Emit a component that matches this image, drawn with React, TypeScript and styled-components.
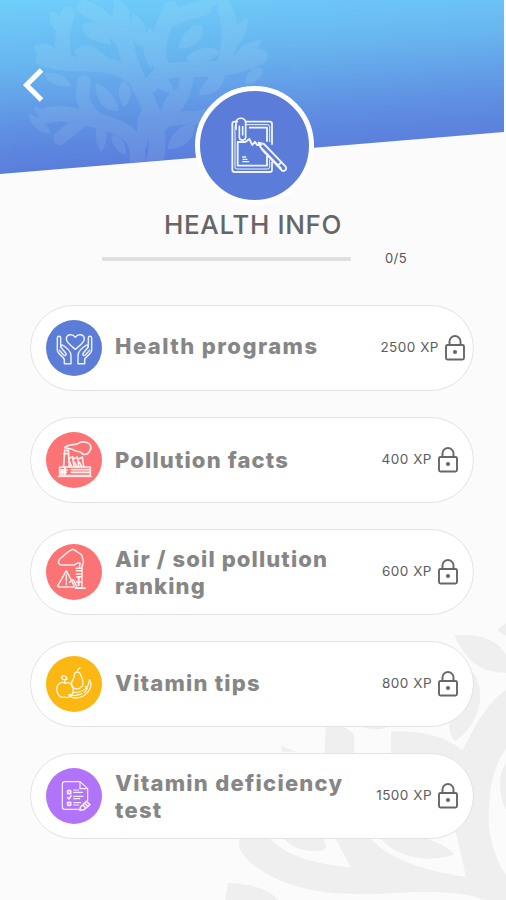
import React from "react";
import styled, { createGlobalStyle } from "styled-components";

const GlobalStyle = createGlobalStyle`
  * { box-sizing: border-box; }
  body { margin: 0; background: #fbfbfb; font-family: Inter, "Liberation Sans", sans-serif; }
`;

const Screen = styled.main`
  position: relative;
  width: 506px;
  height: 900px;
  overflow: hidden;
  background: #fbfbfb;
`;

const Header = styled.header`
  height: 175px;
  width: 504px;
  padding: 68px 0 0 22px;
  background: linear-gradient(176deg, #6fcffb 0%, #68b5ef 32%, #5f90e2 62%, #5a79da 88%);
  clip-path: polygon(0 0, 100% 0, 100% 132px, 0 174px);
`;

const HeaderTree = styled.svg`
  position: absolute;
  left: 0;
  top: 0;
  width: 300px;
  height: 190px;
`;

const CornerTree = styled.svg`
  position: absolute;
  right: 0;
  bottom: 0;
  width: 300px;
  height: 300px;
`;

const BackButton = styled.button`
  position: relative;
  display: block;
  width: 24px;
  height: 35px;
  padding: 0;
  border: 0;
  background: none;
  svg { display: block; }
`;

const Emblem = styled.div`
  position: relative;
  width: 119px;
  height: 119px;
  margin: -89px 0 0 195px;
  border: 5px solid #fff;
  border-radius: 50%;
  background: #5b7dd9;
  svg { display: block; width: 109px; height: 109px; }
`;

const Title = styled.h1`
  position: relative;
  margin: 4px 0 0;
  padding-left: 164px;
  font-size: 26px;
  font-weight: 500;
  line-height: 32px;
  letter-spacing: 0.65px;
  white-space: nowrap;
  color: #666;
`;

const Progress = styled.div`
  position: relative;
  display: flex;
  align-items: center;
  gap: 34px;
  height: 20px;
  margin: 7px 0 0 102px;
`;

const Track = styled.div`
  width: 249px;
  height: 4px;
  margin-top: 1px;
  border-radius: 1px;
  background: #dfdfdf;
`;

const Count = styled.span`
  font-size: 13px;
  letter-spacing: 0.4px;
  color: #555;
`;

const List = styled.ul`
  position: relative;
  display: grid;
  gap: 26px;
  margin: 37px 0 0 30px;
  padding: 0;
  list-style: none;
`;

const Card = styled.li<{ $end: number }>`
  display: flex;
  align-items: center;
  width: 444px;
  height: 86px;
  padding: 0 ${(p) => p.$end}px 0 15px;
  border: 1px solid #e3e3e3;
  border-radius: 43px;
  background: #fff;
`;

const Badge = styled.div<{ $color: string }>`
  flex: none;
  width: 56px;
  height: 56px;
  border-radius: 50%;
  background: ${(p) => p.$color};
  svg { display: block; width: 56px; height: 56px; }
`;

const Label = styled.span<{ $spacing: number; $lift: number }>`
  flex: 1;
  margin: 0 0 ${(p) => p.$lift}px 13px;
  font-size: 22px;
  font-weight: 800;
  line-height: 27px;
  letter-spacing: ${(p) => p.$spacing}px;
  white-space: pre;
  color: #868686;
`;

const Price = styled.span`
  margin: -3px 5px 0 0;
  font-size: 13.5px;
  letter-spacing: 0.5px;
  white-space: nowrap;
  color: #5c5c5c;
`;

const LockSvg = styled.svg`
  flex: none;
  width: 22px;
  height: 28px;
`;

const Lock = () => (
  <LockSvg viewBox="0 0 22 28" fill="none" stroke="#666" strokeWidth="1.9">
    <rect x="2" y="11" width="18" height="14.5" rx="1.5" />
    <path d="M5.5 11V7.5a5.5 5.5 0 0 1 11 0V11" />
    <circle cx="11" cy="18" r="2.1" fill="#666" stroke="none" />
  </LockSvg>
);

type LineProps = { width?: number; children: React.ReactNode };
const LineIcon = ({ width = 4.4, children }: LineProps) => (
  <svg viewBox="18 30 168 168" fill="none" stroke="#fff" strokeOpacity="0.88" strokeWidth={width} strokeLinecap="round" strokeLinejoin="round">
    {children}
  </svg>
);

const HandsHeart = () => (
  <LineIcon>
    <path d="M106 118C96 109 79 98 79 87c0-14 18-18 27-5 8-13 27-9 27 5 0 11-17 22-27 31Z" />
    <path d="M52 84c0-7 10-7 10 0v27l15 18c4 5-1 10-6 6L58 121M52 84v37c0 11 20 19 21 28v12h20v-24c0-12-14-25-24-31-5-3-8 2-5 6" />
    <path d="M155 84c0-7-10-7-10 0v27l-15 18c-4 5 1 10 6 6l13-14M155 84v37c0 11-20 19-21 28v12h-20v-24c0-12 14-25 24-31 5-3 8 2 5 6" />
  </LineIcon>
);

const Factory = () => (
  <LineIcon width={5}>
    <path d="M74 77c12-13 31-6 41-13 12-9 35-3 37 9 3 10-4 13-5 18-6 9-18 8-23 1-7-5-13-2-19-6-11-8-22-6-31-9Z" />
    <path d="M74 85h11l3 49M74 85l-3 49M72 95h14" />
    <path d="M59 135h92v26H59ZM62 144h20M62 151h17M94 143h56M94 151h56" />
    <path d="M88 109l10-5 4 30M102 110l10-5 4 29M117 110l10-5 4 29M88 119l7 15M103 120l7 14M118 120l7 14" />
    <path d="M54 164h100" strokeWidth="3" />
    <path d="M75 137v18M67 144v12" strokeWidth="7" />
  </LineIcon>
);

const Hazard = () => (
  <LineIcon>
    <path d="M120 88c-7-3-12 1-17 5H65c-7 0-11-5-9-13 2-6 7-9 12-12 9-9 20-18 29-22 7 1 13 6 18 10 9 4 13 10 12 16 6 6 3 14 1 21" />
    <path d="M120 88l-2 14M127 92l-1 10" />
    <path d="M108 103h18v59h-20M109 110h15M109 120h15M110 128h14M109 144h15" />
    <path d="M79 110 54 154q-2 5 4 5h40q7 0 4-5ZM79 122v20M79 147v4M106 163h30" />
    <path d="M88 145l12-8 10 20" />
    <path d="M116 130v24" strokeWidth="6" />
  </LineIcon>
);

const Fruit = () => (
  <LineIcon width={3.8}>
    <path d="M75 112c-12-8-25 3-25 17 0 16 12 29 24 24 13 6 27-7 26-22-1-17-13-25-25-19Z" />
    <path d="M75 111c-2-7 0-12 5-14M64 93c8-8 18-1 17 7-9 3-15-1-17-7Z" />
    <path d="M95 119c-5-13 10-20 8-32-1-9 14-13 18-3 4 13 14 22 5 37-10 12-27 9-31-2ZM112 75c1-5 4-8 8-10" />
    <path d="M149 101c13 26-12 53-41 55-9 1-16-3-21-8M149 101c-3 4-1 11-6 19-8 14-25 20-44 20M136 121c9 2 6 10-3 19M87 145c10 5 27 3 38-2" />
  </LineIcon>
);

const Checklist = () => (
  <LineIcon width={3.6}>
    <path d="M120 71H75q-8 0-8 8v67q0 8 8 8h43M120 71l23 21v36M120 71v21h23" />
    <path d="M101 96h15M101 103h26M101 115h28M101 122h18M101 134h21M101 141h15" />
    <path d="M83 98h9v9h-9ZM83 119l4 4 6-9M83 133h9v9h-9Z" strokeWidth="5" />
    <path d="m121 148 18-18 11 10-18 15-12 2ZM129 142l9 8M134 136l9 9" strokeWidth="4.5" />
  </LineIcon>
);

const Notebook = () => (
  <svg viewBox="33 31 327 327" fill="none" stroke="#fff" strokeOpacity="0.92" strokeWidth="5.5" strokeLinecap="round" strokeLinejoin="round">
    <path d="M249 190v-60q0-7-7-7h-72M145 123h-9q-6 0-6 7v137q0 7 7 7h105q7 0 7-7v-22" />
    <path d="M242 183v-45q0-6-6-6h-64M143 132q-5 0-5 6v121q0 6 6 6h92q6 0 6-6v-21" strokeWidth="3" />
    <path d="M182 141h52v40M146 184v71h88v-28M146 184h23l12-9 9 18 8-10 6 10h12" />
    <path d="M151 137v33c0 11 19 11 19 0v-43c0-19-29-19-29 0v19M161 138v25" strokeWidth="5" />
    <path d="m208 186 17 4 65 68c5 11-7 17-14 9l-57-60ZM213 198l63 65M268 253l10-9" />
    <path d="M161 229h9M162 236h12M161 243h18" strokeWidth="4" />
  </svg>
);

const HeaderLeaves = () => (
  <HeaderTree viewBox="0 0 900 570">
    <defs><clipPath id="sky"><path d="M0 0H900V445L0 520Z" /></clipPath></defs>
    <g clipPath="url(#sky)">
      <g opacity="0.09" fill="#e8faff" stroke="#e8faff" strokeLinecap="round">
        <g fill="none">
          <path d="M410 500C425 410 380 384 285 360S165 339 138 347" strokeWidth="46" />
          <path d="M460 500C486 420 466 350 430 278S374 159 362 38" strokeWidth="50" />
          <path d="M402 234C325 169 235 210 129 177M196 190Q175 123 204 41M357 112Q319 48 252 22" strokeWidth="44" />
          <path d="M454 253C507 164 620 250 780 170M484 196Q458 140 512 26M673 193Q704 93 674 26M520 55Q560 35 612 24" strokeWidth="46" />
          <path d="M484 374C532 330 596 382 654 322M482 353C549 323 561 256 561 214M285 350Q235 314 252 246M249 357Q218 385 180 415" strokeWidth="40" />
        </g>
        <g stroke="none">
          <path d="M101 140C145 112 186 157 180 177 139 186 114 177 101 140Z" />
          <path d="M222 154C267 112 299 155 330 178 278 201 239 191 222 154Z" />
          <path d="M246 76C288 51 332 95 333 134 283 127 248 111 246 76Z" />
          <path d="M398 42C440 57 448 107 428 143 395 128 383 93 398 42ZM449 83C480 114 479 162 453 205 421 160 428 110 449 83Z" />
          <path d="M535 146C544 99 579 67 606 78 616 116 589 146 535 146ZM557 177C585 139 637 135 661 156 628 191 587 198 557 177Z" />
          <path d="M742 53C706 61 690 109 698 150 733 121 748 86 742 53ZM784 120C742 123 708 147 701 180 750 174 775 152 784 120Z" />
          <path d="M133 222C155 210 207 230 215 259 168 263 141 248 133 222ZM287 250C319 258 359 302 355 334 310 334 286 299 287 250ZM371 241C402 264 398 303 371 321 350 291 354 258 371 241Z" />
          <path d="M456 220C498 224 525 253 518 280 481 278 458 255 456 220ZM482 334C495 283 531 255 560 263 564 306 529 333 482 334Z" />
          <path d="M104 320C125 323 142 340 143 354 115 351 103 338 104 320ZM87 342C120 352 149 376 151 402 115 398 89 373 87 342ZM300 370C325 386 326 423 304 456 281 423 282 389 300 370ZM336 404C367 409 382 434 377 464 348 455 333 431 336 404Z" />
          <path d="M503 448C508 400 545 370 584 374 585 416 553 446 503 448ZM596 285C610 234 647 211 673 220 676 264 641 290 596 285ZM735 251C739 216 762 194 787 205 790 230 769 253 735 251Z" />
          <path d="M425 330C455 366 452 419 432 454 406 414 405 366 425 330Z" />
          <path d="M339 0C378 2 378 14 346 26ZM603 0 690 1C671 20 638 23 603 0ZM150 35C185 36 195 70 188 103 158 94 145 68 150 35Z" />
        </g>
      </g>
    </g>
  </HeaderTree>
);

const CornerLeaves = () => (
  <CornerTree viewBox="0 0 900 900" fill="#efefef">
    <path d="M745 107C807 99 874 115 900 164V218C829 217 785 190 745 107ZM873 91 900 70V108Z" />
    <path d="M800 215C840 270 830 360 748 424 713 384 728 320 796 273Z" />
    <path d="M900 270C850 305 820 350 770 451 710 405 640 390 555 396V470L690 530 753 710 780 830C690 817 560 790 487 710H385L435 802C300 790 225 755 187 710H104C90 735 105 765 140 793 260 886 420 889 570 879 710 869 790 882 835 900H900V826C861 765 840 685 850 610 853 545 869 491 900 446Z" />
    <path d="M360 374C395 377 435 382 445 407V460H355ZM451 370C475 392 530 394 555 376ZM225 437 270 455H228Z" />
    <path d="M900 490C873 526 879 590 900 630Z" />
    <path d="M525 715C565 690 700 710 744 763 690 788 570 779 525 715Z" />
    <path d="M230 712C251 739 285 754 334 753 359 752 368 745 350 712Z" />
    <path d="M65 850C135 849 200 872 215 900H58Z" />
  </CornerTree>
);

const items = [
  { label: "Health programs", spacing: 1.45, lift: 4, xp: "2500 XP", color: "#5b7dd8", end: 7, Icon: HandsHeart },
  { label: "Pollution facts", spacing: 1.15, lift: 0, xp: "400 XP", color: "#fb7374", end: 14, Icon: Factory },
  { label: "Air / soil pollution\nranking", spacing: 1.12, lift: -2, xp: "600 XP", color: "#fb7374", end: 14, Icon: Hazard },
  { label: "Vitamin tips", spacing: 1.2, lift: 2, xp: "800 XP", color: "#fbb812", end: 14, Icon: Fruit },
  { label: "Vitamin deficiency\ntest", spacing: 1.27, lift: -2, xp: "1500 XP", color: "#b174f9", end: 14, Icon: Checklist },
];

export default function App() {
  return (
    <Screen>
      <GlobalStyle />
      <CornerLeaves />
      <Header>
        <HeaderLeaves />
        <BackButton aria-label="Back">
          <svg width="24" height="35" viewBox="0 0 24 35" fill="none" stroke="#fff" strokeWidth="5">
            <path d="M19.5 2 4.5 17l15 15" />
          </svg>
        </BackButton>
      </Header>
      <Emblem><Notebook /></Emblem>
      <Title>HEALTH INFO</Title>
      <Progress>
        <Track />
        <Count>0/5</Count>
      </Progress>
      <List>
        {items.map(({ label, spacing, lift, xp, color, end, Icon }) => (
          <Card key={label} $end={end}>
            <Badge $color={color}><Icon /></Badge>
            <Label $spacing={spacing} $lift={lift}>{label}</Label>
            <Price>{xp}</Price>
            <Lock />
          </Card>
        ))}
      </List>
    </Screen>
  );
}
